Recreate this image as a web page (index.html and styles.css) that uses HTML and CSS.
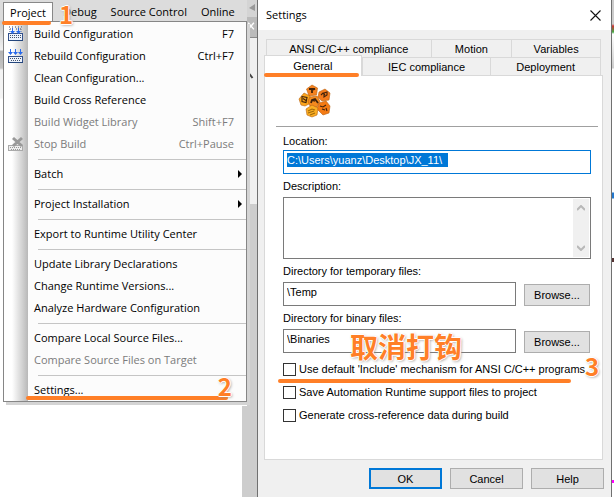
FILE: index.html
```html
<!DOCTYPE html>
<html lang="en">
<head>
<meta charset="utf-8">
<title>Project settings</title>
<link rel="stylesheet" href="styles.css">
</head>
<body>
<div class="screen">
  <section class="ide">
    <div class="ide-edge"></div>
    <div class="ide-main">
      <nav class="menubar">
        <button class="menubar-item open">Project</button>
        <button class="menubar-item debug">Debug</button>
        <button class="menubar-item">Source Control</button>
        <button class="menubar-item">Online</button>
        <span class="mark mark-one">1</span>
      </nav>
      <div class="menu">
        <button class="item"><svg class="icon" viewBox="0 0 16 16"><path d="M1 1h1M4 1h1M7 1h1M10 1h1M13 1h1M2 3h1M8 3h1M12 3h1" stroke="#33445e"/><rect x=".5" y="7.500" width="14" height="7" fill="#eef3fc" stroke="#33518c"/><path d="M2 9.500h11M2 11.500h11" stroke="#44546c" stroke-dasharray="1 1"/><path d="M0 14.500h15" stroke="#24467c"/><path d="M1.500 1v6M13.500 1v6" stroke="#99a4b8" stroke-dasharray="1 1"/><path d="M4.500 2v5M10.500 2v5" stroke="#2869ec"/><path d="M2 5h5l-2.500 3zM8 5h5l-2.500 3z" fill="#2869ec"/></svg><span>Build Configuration</span><kbd>F7</kbd></button>
        <button class="item"><svg class="icon" viewBox="0 0 16 16"><rect x=".5" y="8.500" width="14" height="6" fill="#eef3fc" stroke="#33518c"/><path d="M2 10.500h11M3 12.500h10" stroke="#44546c" stroke-dasharray="1 1"/><path d="M0 14.500h15" stroke="#24467c"/><path d="M2.500 1v4M7.500 1v4M12.500 1v4" stroke="#2869ec"/><path d="M0 4h5l-2.500 3zM5 4h5l-2.500 3zM10 4h5l-2.500 3z" fill="#2869ec"/></svg><span>Rebuild Configuration</span><kbd>Ctrl+F7</kbd></button>
        <button class="item"><span>Clean Configuration...</span></button>
        <button class="item"><span>Build Cross Reference</span></button>
        <button class="item" disabled><span>Build Widget Library</span><kbd>Shift+F7</kbd></button>
        <button class="item" disabled><svg class="icon" viewBox="0 0 16 16"><rect x=".5" y="9.500" width="14" height="5" fill="#eee" stroke="#aaa"/><path d="M2 11.500h11M3 13.500h10" stroke="#999" stroke-dasharray="1 1"/><path d="M5 2l9 8M14 2l-9 8" stroke="#999" stroke-width="3"/></svg><span>Stop Build</span><kbd>Ctrl+Pause</kbd></button>
        <hr>
        <button class="item sub"><span>Batch</span></button>
        <hr>
        <button class="item sub"><span>Project Installation</span></button>
        <hr>
        <button class="item"><span>Export to Runtime Utility Center</span></button>
        <hr>
        <button class="item"><span>Update Library Declarations</span></button>
        <button class="item"><span>Change Runtime Versions...</span></button>
        <button class="item"><span>Analyze Hardware Configuration</span></button>
        <hr>
        <button class="item"><span>Compare Local Source Files...</span></button>
        <button class="item" disabled><span>Compare Source Files on Target</span></button>
        <hr>
        <button class="item"><span>Settings...</span></button>
        <span class="mark mark-two">2</span>
      </div>
      <div class="ide-rest"></div>
    </div>
    <div class="ide-side">
      <svg class="side-top" viewBox="0 0 10 17"><path d="M8 4l-6 4 6 3z" fill="#999"/></svg>
      <svg class="side-close" viewBox="0 0 10 21"><path d="M1 6l6 7M7 6l-6 7" stroke="#fff" stroke-width="1.500"/></svg>
      <svg class="side-track" viewBox="0 0 10 166"><path d="M2.500 36l3 4" stroke="#444" stroke-width="2"/></svg>
      <div class="side-thumb"></div>
    </div>
  </section>

  <section class="dialog">
    <header class="title"><h1>Settings</h1><button class="close" aria-label="Close"><svg viewBox="0 0 11 11"><path d="M.5.5l10 10M10.500.5l-10 10" fill="none" stroke="#111" stroke-width="1.100"/></svg></button></header>
    <div class="tabs">
      <div class="tab-row back"><button>ANSI C/C++ compliance</button><button>Motion</button><button>Variables</button></div>
      <div class="tab-row front"><button class="active">General</button><button>IEC compliance</button><button>Deployment</button></div>
    </div>
    <form class="panel">
      <div class="logo-row">
        <svg class="logo" viewBox="0 0 34 34">
          <g stroke="#b8620f" stroke-width=".6">
            <path d="M8.500 5l5.500-4 5.500 3-1 7-7.500 1z" fill="#f58220"/>
            <path d="M21 8l6-3 5 4-1 7-7 1-4-4z" fill="#f47b1c"/>
            <path d="M1 15l5-6 6 3 1 7-6 3-4-1z" fill="#fba61c"/>
            <path d="M12 13l7-1 3 5-3 6-7-1-2-5z" fill="#f58a1f"/>
            <path d="M21 19l7-2 4 5-1 7-6 2-6-6z" fill="#f47b14"/>
            <path d="M8 25l6-4 6 3-1 7-5 2-5-2z" fill="#fbae22"/>
          </g>
          <g fill="none" stroke="#42230b" stroke-width="1.100">
            <path d="M11 5h6l-3 1v3" stroke-width="1.800"/>
            <path d="M23 11l2-2 2 2M26 9l3-1v3l-3 2z"/>
            <path d="M4 12.500l5 1-1 5-4-1zM5 14.500l3 2"/>
            <path d="M13 19l1-3 3-1 3 4M14 16l3 1" stroke-width="1.800"/>
            <path d="M22 22l3 1 3-2M24 25l3 1M28 24l1 3"/>
            <path d="M10 27l4-2 3 1M10 29l6-2M12 31l5-2" stroke="#a06a0c"/>
          </g>
        </svg>
      </div>
      <div class="fields">
        <label class="caption first" for="loc">Location:</label>
        <div class="box focus"><input id="loc" class="selected" value="C:\Users\yuanz\Desktop\JX_11\"></div>
        <label class="caption" for="desc">Description:</label>
        <div class="area"><textarea id="desc"></textarea><div class="scroll"><svg viewBox="0 0 8 6"><path d="M0 5l4-4 4 4" fill="none" stroke="#b8b8b8" stroke-width="2"/></svg><svg viewBox="0 0 8 6"><path d="M0 1l4 4 4-4" fill="none" stroke="#b8b8b8" stroke-width="2"/></svg></div></div>
        <label class="caption" for="tmp">Directory for temporary files:</label>
        <div class="pair"><div class="box"><input id="tmp" value="\Temp"></div><button type="button" class="btn browse">Browse...</button></div>
        <label class="caption" for="bin">Directory for binary files:</label>
        <div class="pair"><div class="box"><input id="bin" value="\Binaries"></div><button type="button" class="btn browse">Browse...</button><span class="mark mark-note" lang="zh">取消打钩</span></div>
        <div class="checks">
          <label class="check underlined"><input type="checkbox">Use default 'Include' mechanism for ANSI C/C++ programs<span class="mark mark-three">3</span></label>
          <label class="check"><input type="checkbox">Save Automation Runtime support files to project</label>
          <label class="check"><input type="checkbox">Generate cross-reference data during build</label>
        </div>
      </div>
    </form>
    <footer class="actions"><button class="btn ok">OK</button><button class="btn">Cancel</button><button class="btn">Help</button></footer>
  </section>
  <div class="beyond"></div>
</div>
</body>
</html>
```
FILE: styles.css
```css
* { box-sizing: border-box; }
body { margin: 0; background: #fff; color: #000; font: 11px/16px "Open Sans", "Noto Sans", sans-serif; }
button { margin: 0; padding: 0; border: 0; background: none; color: inherit; font: inherit; }
.screen { display: grid; grid-template-columns: minmax(0, 257fr) minmax(0, 355fr) 2px; min-height: 100vh; }

.ide { display: grid; grid-template-columns: 3px minmax(0, 1fr) 10px; }
.ide-edge { background: linear-gradient(#dcdcdc 20px, #c8c8c8 21px, #f2f2f2 50px, #b4b4b4 51px, #c4c4c4 68px, #f4f4f4 70px, #f4f4f4 98px, #fff 99px); }
.ide-main { display: flex; flex-direction: column; min-width: 0; }
.ide-rest { flex: 1; margin-top: 4px; border-right: 5px solid #cdcdcd; }
.menubar { position: relative; z-index: 2; display: flex; height: 21px; padding-top: 2px; background: #dcdcdc; }
.menubar-item { height: 19px; padding: 0 7px; white-space: nowrap; line-height: 20px; }
.menubar-item.open { position: relative; width: 50px; padding: 0; border: 1px solid #888; border-bottom: 0; background: #fff; }
.menubar-item.debug { padding-left: 10px; }
.menubar-item.open::after { content: ""; position: absolute; left: -2px; right: 1px; top: 18px; height: 4px; border-radius: 2px; background: #ff7f27; }
.menu { position: relative; z-index: 1; border: 1px solid #868686; background: linear-gradient(90deg, #fff 8px, #b8b8b8 24px, #fcfcfc 24px); box-shadow: 3px 3px #d4d4d4; padding-top: 1px; }
.item { position: relative; display: flex; justify-content: space-between; width: 100%; height: 22px; padding: 0 12px 0 30px; line-height: 21px; white-space: nowrap; text-align: left; }
.item:disabled { color: #7b7b7b; }
.item kbd { font: inherit; }
.icon { position: absolute; left: 4px; top: 3px; width: 16px; height: 16px; }
.menu hr { height: 1px; margin: 4px 0 3px 34px; border: 0; background: #c5c5c5; }
.sub::after { content: ""; position: absolute; right: 4px; top: 7px; border: 4px solid transparent; border-left-color: #000; border-right: 0; }
.menu::after { content: ""; position: absolute; left: 22px; right: 18px; bottom: 1px; height: 4px; border-radius: 2px; background: #ff7f27; }
.mark { position: absolute; z-index: 2; color: #ff7f27; font: bold 24px/26px "Noto Sans CJK SC", sans-serif; text-shadow: 1px 0 #fff, -1px 0 #fff, 0 1px #fff, 0 -1px #fff, 1px 1px 3px #888; }
.mark-one { left: 56px; top: 1px; }
.mark-two { right: 14px; bottom: 2px; }
.ide-side { display: flex; flex-direction: column; background: #f0f0f0; }
.side-top { height: 17px; background: #d4d4d4; }
.side-close { height: 21px; border-bottom: 1px solid #8a8a8a; background: #bbb; }
.side-track { height: 166px; }
.side-thumb { flex: 1; background: #cdcdcd; }

.dialog { display: flex; flex-direction: column; border: solid #707070; border-width: 0 1px; background: #f0f0f0; font: 11px/16px "Liberation Sans", Arial, sans-serif; }
.title { display: flex; justify-content: space-between; align-items: center; height: 30px; padding: 0 10px 0 8px; background: #fff; }
.title h1 { margin: 0; font: 11px/30px "Open Sans", sans-serif; }
.close svg { display: block; width: 11px; height: 11px; }
.tabs { margin: 9px 10px 0 6px; }
.tab-row { display: grid; height: 18px; border: 1px solid #d9d9d9; border-bottom: 0; }
.tab-row button + button { border-left: 1px solid #d9d9d9; }
.back { grid-template-columns: 164fr 81fr 89fr; margin-left: 2px; }
.front { grid-template-columns: 97fr 129fr 110fr; }
.front .active { margin: -3px 0 -1px -1px; border: 1px solid #d9d9d9; border-bottom: 0; background: #fff; position: relative; }
.front .active::after { content: ""; position: absolute; left: -1px; right: 2px; bottom: -1px; height: 4px; border-radius: 2px; background: #ff7f27; }
.panel { flex: 1; margin: 0 8px 0 6px; padding: 0 4px 0 11px; border: 1px solid #d9d9d9; background: #fff; }
.logo-row { height: 51px; padding: 8px 0 0 22px; border-bottom: 1px solid #a0a0a0; }
.logo { display: block; width: 34px; height: 34px; }
.fields { display: flex; flex-direction: column; padding: 0 7px; }
.caption { height: 23px; padding-top: 4px; }
.caption.first { padding-top: 6px; }
.box { flex: 1; padding: 2px 3px; border: 1px solid #7a7a7a; background: #fff; height: 24px; }
.box.focus { flex: none; border-color: #0078d7; }
.box input { display: block; width: 100%; height: 14px; padding: 0; border: 0; outline: 0; font: inherit; }
.box .selected { width: 161px; background: #0078d7; color: #fff; }
.area { display: flex; height: 62px; border: 1px solid #7a7a7a; }
.area textarea { flex: 1; border: 0; resize: none; outline: 0; }
.scroll { display: flex; flex-direction: column; justify-content: space-between; align-items: center; width: 16px; margin: 1px; padding: 6px 0; background: #f0f0f0; }
.scroll svg { width: 8px; height: 6px; }
.pair { position: relative; display: flex; gap: 8px; align-items: flex-end; padding-right: 1px; }
.btn { height: 22px; border: 1px solid #adadad; background: #e1e1e1; }
.browse { width: 66px; }
.checks { display: flex; flex-direction: column; align-items: flex-start; gap: 7px; padding-top: 8px; }
.check { position: relative; display: flex; align-items: center; gap: 3px; white-space: nowrap; }
.check input { appearance: none; width: 13px; height: 13px; margin: 0; border: 1px solid #333; background: #fff; }
.underlined::after { content: ""; position: absolute; left: -5px; right: 14px; top: 18px; height: 4px; border-radius: 2px; background: #ff7f27; }
.mark-three { right: -14px; top: -8px; }
.mark-note { left: 67px; top: -1px; font: bold 28px/36px "Noto Sans CJK SC", sans-serif; }
.actions { display: flex; gap: 8px; justify-content: flex-end; padding: 8px 7px 8px 0; }
.actions .btn { width: 73px; height: 21px; }
.actions .ok { border: 2px solid #0078d7; }
.beyond { background: linear-gradient(#ccc 24px, #c33 26px, #4a4 32px, #fff 34px, #ccc 68px, #fff 69px, #fff 192px, #27c 193px, #27c 198px, #fff 199px, #fff 258px, #533 258px, #533 262px, #fff 262px, #fff 480px, #f0f 480px, #f0f 483px, #fff 483px); }
```
